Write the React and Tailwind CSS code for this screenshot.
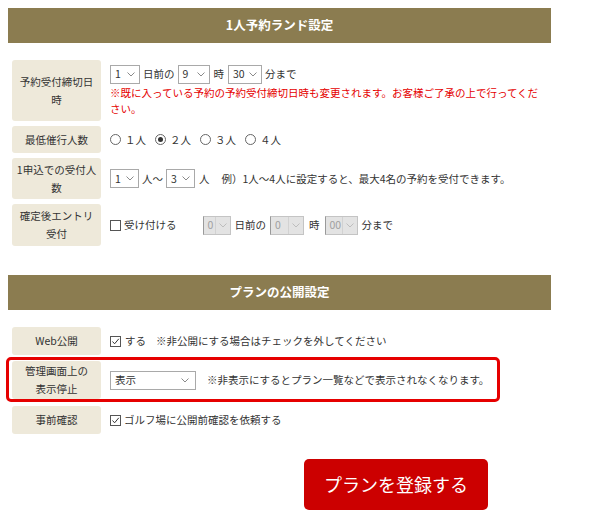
import React from 'react'

// Small chevron used inside the fake select boxes
function Chevron({ color = '#8a8a8a' }) {
  return (
    <svg width="8" height="5" viewBox="0 0 8 5" fill="none">
      <path d="M0.5 0.5 L4 4 L7.5 0.5" stroke={color} strokeWidth="1" />
    </svg>
  )
}

function Select({ value, width, disabled = false }) {
  if (disabled) {
    return (
      <div
        className="flex h-[19px] items-center justify-between border border-[#c4c4c4] border-l-[#9a9a9a] bg-[#e3e3e3] pl-[4px] pr-[3px] text-[#a0a0a0]"
        style={{ width }}
      >
        <span>{value}</span>
        <span className="flex h-full items-center border-l border-[#d2d2d2] pl-[3px]">
          <Chevron color="#bdbdbd" />
        </span>
      </div>
    )
  }
  return (
    <div
      className="flex h-[19px] items-center justify-between border border-[#a9a9a9] bg-white pl-[4px] pr-[4px] text-[#333]"
      style={{ width }}
    >
      <span>{value}</span>
      <Chevron />
    </div>
  )
}

function Checkbox({ checked }) {
  return (
    <span className="flex h-[11px] w-[11px] items-center justify-center border border-[#555] bg-white">
      {checked && (
        <svg width="9" height="9" viewBox="0 0 9 9" fill="none">
          <path d="M1.5 4.5 L3.6 6.8 L7.8 1.8" stroke="#333" strokeWidth="1" />
        </svg>
      )}
    </span>
  )
}

function Radio({ checked, label }) {
  return (
    <span className="flex w-[45px] items-center gap-[4px]">
      <span className="flex h-[11px] w-[11px] items-center justify-center rounded-full border border-[#666] bg-white">
        {checked && <span className="h-[5px] w-[5px] rounded-full bg-[#333]" />}
      </span>
      <span>{label}</span>
    </span>
  )
}

function Label({ children }) {
  return (
    <div className="flex w-[89px] shrink-0 items-center justify-center rounded-[3px] bg-[#eee9da] text-center leading-[18px] text-[#333]">
      <div>{children}</div>
    </div>
  )
}

function Row({ label, height, children }) {
  return (
    <div className="flex gap-[9px]" style={{ height }}>
      <Label>{label}</Label>
      <div className="flex items-center">{children}</div>
    </div>
  )
}

function Header({ title }) {
  return (
    <div className="flex h-[35px] w-[543px] items-center justify-center bg-[#8b7c50] text-[12.5px] font-bold text-white">
      {title}
    </div>
  )
}

export default function App() {
  return (
    <div className="h-[531px] w-[600px] overflow-hidden bg-white pl-2 pt-2 text-[10.5px] text-[#333] font-['Noto_Sans_CJK_JP','Noto_Sans',sans-serif]">
      <Header title="1人予約ランド設定" />

      <div className="mt-[17px] flex flex-col gap-[5px] pl-1">
        <Row label={<>予約受付締切日<br />時</>} height={61}>
          <div className="flex w-[436px] flex-col">
            <div className="flex items-center gap-[3px]">
              <Select value="1" width={30} />
              <span>日前の</span>
              <Select value="9" width={32} />
              <span className="px-[1px]">時</span>
              <Select value="30" width={34} />
              <span>分まで</span>
            </div>
            <p className="mt-[1px] leading-[16px] text-[#e50000]">
              ※既に入っている予約の予約受付締切日時も変更されます。お客様ご了承の上で行ってください。
            </p>
          </div>
        </Row>

        <Row label="最低催行人数" height={27}>
          <div className="flex items-center">
            <Radio label="１人" />
            <Radio label="２人" checked />
            <Radio label="３人" />
            <Radio label="４人" />
          </div>
        </Row>

        <Row label={<>1申込での受付人<br />数</>} height={41}>
          <div className="flex items-center gap-[3px]">
            <Select value="1" width={29} />
            <span>人～</span>
            <Select value="3" width={29} />
            <span className="ml-[1px]">人</span>
            <span className="ml-[9px]">例）1人～4人に設定すると、最大4名の予約を受付できます。</span>
          </div>
        </Row>

        <Row label={<>確定後エントリ<br />受付</>} height={42}>
          <div className="flex items-center gap-[4px]">
            <Checkbox />
            <span className="ml-[-1px]">受け付ける</span>
            <span className="ml-[22px]">
              <Select value="0" width={28} disabled />
            </span>
            <span>日前の</span>
            <Select value="0" width={34} disabled />
            <span className="px-[1px]">時</span>
            <Select value="00" width={33} disabled />
            <span>分まで</span>
          </div>
        </Row>
      </div>

      <div className="mt-[29px]">
        <Header title="プランの公開設定" />
      </div>

      <div className="mt-[17px] flex flex-col pl-1">
        <Row label="Web公開" height={28}>
          <div className="flex items-center gap-[4px]">
            <Checkbox checked />
            <span>する</span>
            <span className="ml-[6px]">※非公開にする場合はチェックを外してください</span>
          </div>
        </Row>

        <div className="ml-[-6px] mt-[2px] w-[494px] rounded-[5px] border-[3px] border-[#e60000] pl-[3px] pt-[1px]">
          <Row label={<>管理画面上の<br />表示停止</>} height={38}>
            <div className="flex items-center gap-[11px]">
              <div className="flex h-[19px] w-[86px] items-center justify-between border border-[#a9a9a9] bg-white pl-[4px] pr-[6px]">
                <span>表示</span>
                <Chevron />
              </div>
              <span>※非表示にするとプラン一覧などで表示されなくなります。</span>
            </div>
          </Row>
        </div>

        <div className="mt-[4px]">
          <Row label="事前確認" height={28}>
            <div className="flex items-center gap-[3px]">
              <Checkbox checked />
              <span>ゴルフ場に公開前確認を依頼する</span>
            </div>
          </Row>
        </div>
      </div>

      <div className="mt-[25px] flex pl-[296px]">
        <button className="flex h-[51px] w-[184px] items-center justify-center rounded-[5px] bg-[#cc0000] text-[18px] text-white">
          プランを登録する
        </button>
      </div>
    </div>
  )
}
